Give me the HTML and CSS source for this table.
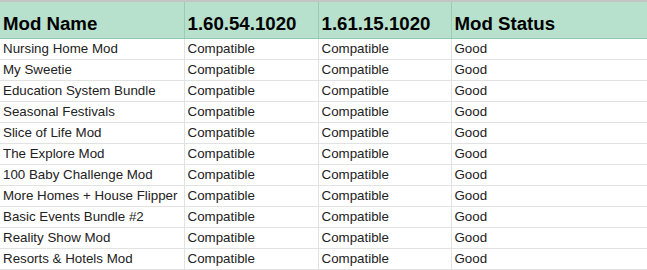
FILE: index.html
```html
<!DOCTYPE html>
<html>
<head>
<meta charset="utf-8">
<link rel="stylesheet" href="styles.css">
</head>
<body>
<table class="sheet">
  <thead>
    <tr class="head">
      <th class="c1">Mod Name</th>
      <th class="c2">1.60.54.1020</th>
      <th class="c3">1.61.15.1020</th>
      <th class="c4">Mod Status</th>
    </tr>
  </thead>
  <tbody>
    <tr><td>Nursing Home Mod</td><td>Compatible</td><td>Compatible</td><td>Good</td></tr>
    <tr><td>My Sweetie</td><td>Compatible</td><td>Compatible</td><td>Good</td></tr>
    <tr><td>Education System Bundle</td><td>Compatible</td><td>Compatible</td><td>Good</td></tr>
    <tr><td>Seasonal Festivals</td><td>Compatible</td><td>Compatible</td><td>Good</td></tr>
    <tr><td>Slice of Life Mod</td><td>Compatible</td><td>Compatible</td><td>Good</td></tr>
    <tr><td>The Explore Mod</td><td>Compatible</td><td>Compatible</td><td>Good</td></tr>
    <tr><td>100 Baby Challenge Mod</td><td>Compatible</td><td>Compatible</td><td>Good</td></tr>
    <tr><td>More Homes + House Flipper</td><td>Compatible</td><td>Compatible</td><td>Good</td></tr>
    <tr><td>Basic Events Bundle #2</td><td>Compatible</td><td>Compatible</td><td>Good</td></tr>
    <tr><td>Reality Show Mod</td><td>Compatible</td><td>Compatible</td><td>Good</td></tr>
    <tr><td>Resorts &amp; Hotels Mod</td><td>Compatible</td><td>Compatible</td><td>Good</td></tr>
  </tbody>
</table>
</body>
</html>
```
FILE: styles.css
```css
html, body {
  margin: 0;
  padding: 0;
  background: #ffffff;
}
.sheet {
  border-collapse: collapse;
  table-layout: fixed;
  width: 647px;
  font-family: "Liberation Sans", Arial, sans-serif;
  color: #000000;
  border-top: 2px solid #c4c4c4;
}
.sheet th, .sheet td {
  padding: 0 3px;
  text-align: left;
  vertical-align: bottom;
  overflow: hidden;
  white-space: nowrap;
  border-left: 1px solid #e2e2e2;
}
.sheet th:first-child, .sheet td:first-child {
  border-left: none;
}
.head th {
  background: #b7e1cd;
  height: 37px;
  font-size: 18.67px;
  font-weight: bold;
  line-height: 22px;
  padding-bottom: 3px;
  box-sizing: border-box;
  border-left-color: #9ccbb4;
  border-bottom: 1px solid #93c6ad;
}
.c1 { width: 184px; }
.c2 { width: 134px; }
.c3 { width: 133px; }
.c4 { width: auto; }
.sheet td {
  height: 21px;
  font-size: 13.33px;
  line-height: 16px;
  padding-bottom: 2px;
  box-sizing: border-box;
  color: #222222;
  border-bottom: 1px solid #e2e2e2;
}
```
